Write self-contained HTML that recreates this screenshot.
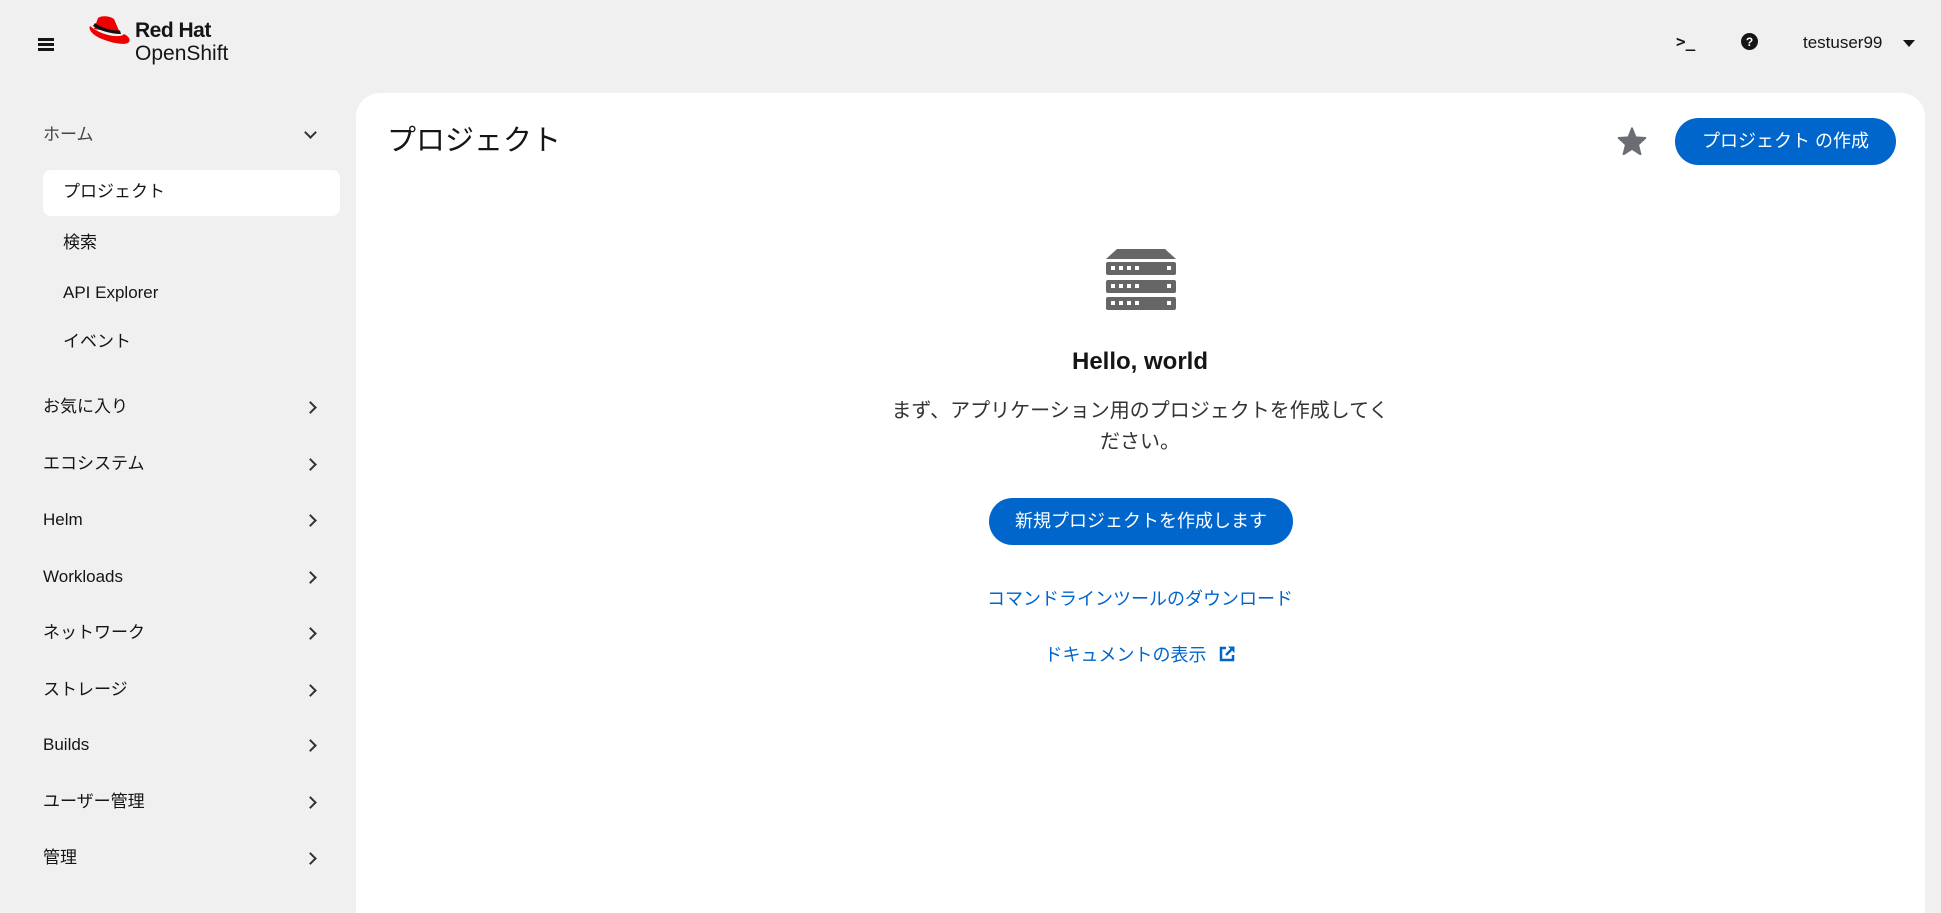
<!DOCTYPE html>
<html><head><meta charset="utf-8"><style>
*{box-sizing:border-box;margin:0;padding:0}
body{width:1941px;height:895px;background:#f0f0f0;font-family:"Liberation Sans","Noto Sans CJK JP",sans-serif;color:#151515;position:relative;overflow:hidden}
.abs{position:absolute}
.nav{position:absolute;left:43px;font-size:17px;color:#151515;line-height:20px}
.sub{left:63px}
.chev{position:absolute;left:306px;width:9px;height:9px;border-right:2.5px solid #333;border-bottom:2.5px solid #333;transform:rotate(-45deg)}
.card{position:absolute;left:356px;top:93px;width:1569px;height:820px;background:#fff;border-radius:24px 24px 0 0}
.btn{position:absolute;background:#0066cc;color:#fff;border-radius:30px;text-align:center;font-size:18px}
.link{position:absolute;color:#0066cc;font-size:18px;text-align:center;width:600px;left:840px}
</style></head><body>
<div class="abs" style="left:38px;top:38px;width:16px;height:2.5px;background:#151515;box-shadow:0 5px 0 #151515,0 10px 0 #151515"></div>
<svg class="abs" style="left:88px;top:15px" width="44" height="32" viewBox="0 0 44 32">
<path d="M10 3 C14 0 22 1 26 4 L32 18 L6 14 Z" fill="#e00"/>
<path d="M2 11 C0 14 4 20 14 24 C24 28 38 31 41 27 C43 24 40 21 36 19 C32 24 12 20 2 11 Z" fill="#e00"/>
<path d="M5 11 C12 16 24 19 33 19 L32 15.5 C24 16 13 13 7 8 Z" fill="#111"/>
</svg>
<div class="abs" style="left:135px;top:19px;font-size:21px;font-weight:bold;letter-spacing:-0.5px">Red Hat</div>
<div class="abs" style="left:135px;top:42px;font-size:21px">OpenShift</div>
<div class="abs" style="left:1676px;top:32px;font-size:16px;font-weight:bold;font-family:'DejaVu Sans Mono',monospace">&gt;_</div>
<svg class="abs" style="left:1741px;top:33px" width="17" height="17" viewBox="0 0 17 17"><circle cx="8.5" cy="8.5" r="8.5" fill="#151515"/><text x="8.5" y="13" font-size="12" font-weight="bold" fill="#fff" text-anchor="middle" font-family="Liberation Sans">?</text></svg>
<div class="abs" style="left:1803px;top:33px;font-size:17px">testuser99</div>
<div class="abs" style="left:1903px;top:40px;border-left:6px solid transparent;border-right:6px solid transparent;border-top:7px solid #151515"></div>

<div class="nav" style="top:125px;color:#444">ホーム</div><div class="chev" style="top:128px;transform:rotate(45deg)"></div>
<div class="abs" style="left:43px;top:170px;width:297px;height:46px;background:#fff;border-radius:8px"></div>
<div class="nav sub" style="top:182px">プロジェクト</div>
<div class="nav sub" style="top:233px">検索</div>
<div class="nav sub" style="top:283px">API Explorer</div>
<div class="nav sub" style="top:332px">イベント</div>
<div class="nav" style="top:397px">お気に入り</div><div class="chev" style="top:403px"></div>
<div class="nav" style="top:454px">エコシステム</div><div class="chev" style="top:460px"></div>
<div class="nav" style="top:510px">Helm</div><div class="chev" style="top:516px"></div>
<div class="nav" style="top:567px">Workloads</div><div class="chev" style="top:573px"></div>
<div class="nav" style="top:623px">ネットワーク</div><div class="chev" style="top:629px"></div>
<div class="nav" style="top:680px">ストレージ</div><div class="chev" style="top:686px"></div>
<div class="nav" style="top:735px">Builds</div><div class="chev" style="top:741px"></div>
<div class="nav" style="top:792px">ユーザー管理</div><div class="chev" style="top:798px"></div>
<div class="nav" style="top:848px">管理</div><div class="chev" style="top:854px"></div>

<div class="card"></div>
<div class="abs" style="left:387px;top:117px;font-size:29px">プロジェクト</div>
<svg class="abs" style="left:1617px;top:127px" width="30" height="28" viewBox="0 0 24 23"><path d="M12 1 L15 8.5 L23 9 L17 14.5 L19 22.5 L12 18 L5 22.5 L7 14.5 L1 9 L9 8.5 Z" fill="#6a6e73" stroke="#6a6e73" stroke-linejoin="round" stroke-width="1.5"/></svg>
<div class="btn" style="left:1675px;top:118px;width:221px;height:47px;line-height:47px">プロジェクト の作成</div>

<svg class="abs" style="left:1105px;top:249px" width="72" height="66" viewBox="0 0 72 66">
<path d="M12 0 H60 L71 10 H1 Z" fill="#666"/>
<g fill="#666"><rect x="1" y="13" width="70" height="13" rx="2"/><rect x="1" y="31" width="70" height="13" rx="2"/><rect x="1" y="48" width="70" height="13" rx="2"/></g>
<g fill="#fff">
<rect x="6" y="17" width="4" height="4"/><rect x="14" y="17" width="4" height="4"/><rect x="22" y="17" width="4" height="4"/><rect x="30" y="17" width="4" height="4"/><rect x="62" y="17" width="4" height="4"/>
<rect x="6" y="35" width="4" height="4"/><rect x="14" y="35" width="4" height="4"/><rect x="22" y="35" width="4" height="4"/><rect x="30" y="35" width="4" height="4"/><rect x="62" y="35" width="4" height="4"/>
<rect x="6" y="52" width="4" height="4"/><rect x="14" y="52" width="4" height="4"/><rect x="22" y="52" width="4" height="4"/><rect x="30" y="52" width="4" height="4"/><rect x="62" y="52" width="4" height="4"/>
</g></svg>
<div class="abs" style="left:840px;top:348px;width:600px;text-align:center;font-size:24px;font-weight:bold">Hello, world</div>
<div class="abs" style="left:840px;top:396px;width:600px;text-align:center;font-size:20px;line-height:31px;color:#333">まず、アプリケーション用のプロジェクトを作成してく<br>ださい。</div>
<div class="btn" style="left:989px;top:498px;width:304px;height:47px;line-height:47px">新規プロジェクトを作成します</div>
<div class="link" style="top:585px">コマンドラインツールのダウンロード</div>
<div class="link" style="top:641px">ドキュメントの表示 <svg width="18" height="18" viewBox="0 0 18 18" style="vertical-align:-2px;margin-left:6px"><path d="M8 3 H3 V15 H15 V10" fill="none" stroke="#0066cc" stroke-width="2.5"/><path d="M10 1.5 H16.5 V8 Z" fill="#0066cc"/><path d="M15 3 L8 10" stroke="#0066cc" stroke-width="2.5"/></svg></div>
</body></html>
